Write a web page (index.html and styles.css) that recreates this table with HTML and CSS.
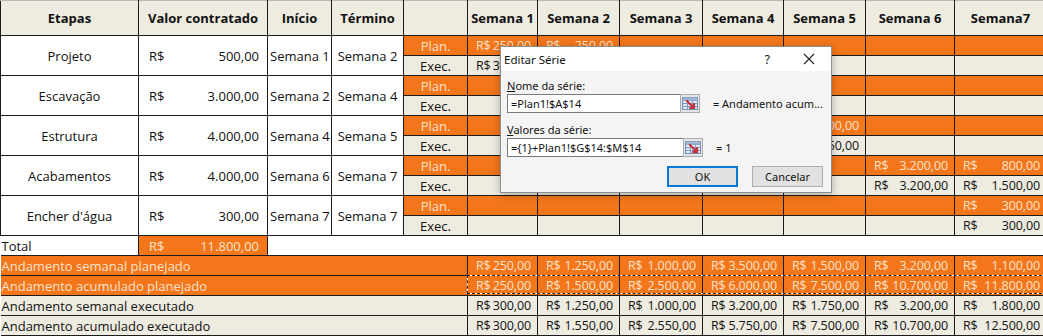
FILE: index.html
```html
<!DOCTYPE html>
<html lang="pt-BR">
<head>
<meta charset="utf-8">
<title>Cronograma físico-financeiro</title>
<link rel="stylesheet" href="styles.css">
</head>
<body>
<div class="sheet">
  <table class="grid">
    <colgroup>
      <col class="c-etapa"><col class="c-valor"><col class="c-ini"><col class="c-fim"><col class="c-tag">
      <col class="c-s1"><col class="c-s2"><col class="c-s3"><col class="c-s4"><col class="c-s5"><col class="c-s6"><col class="c-s7">
    </colgroup>
    <thead>
      <tr class="head">
        <th>Etapas</th><th>Valor contratado</th><th>Início</th><th>Término</th><th></th>
        <th>Semana 1</th><th>Semana 2</th><th>Semana 3</th><th>Semana 4</th><th>Semana 5</th><th>Semana 6</th><th>Semana7</th>
      </tr>
    </thead>
    <tbody>
      <!-- Projeto -->
      <tr class="plan">
        <td rowspan="2" class="stage">Projeto</td>
        <td rowspan="2" class="stage"><div class="acc val"><span>R$</span><span>500,00</span></div></td>
        <td rowspan="2" class="stage wk">Semana 1</td>
        <td rowspan="2" class="stage wk">Semana 2</td>
        <td class="tag">Plan.</td>
        <td><div class="acc"><span>R$</span><span>250,00</span></div></td>
        <td><div class="acc"><span>R$</span><span>250,00</span></div></td>
        <td></td><td></td><td></td><td></td><td></td>
      </tr>
      <tr class="exec">
        <td class="tag">Exec.</td>
        <td><div class="acc"><span>R$</span><span>300,00</span></div></td>
        <td></td>
        <td></td><td></td><td></td><td></td><td></td>
      </tr>
      <!-- Escavação -->
      <tr class="plan">
        <td rowspan="2" class="stage">Escavação</td>
        <td rowspan="2" class="stage"><div class="acc val"><span>R$</span><span>3.000,00</span></div></td>
        <td rowspan="2" class="stage wk">Semana 2</td>
        <td rowspan="2" class="stage wk">Semana 4</td>
        <td class="tag">Plan.</td>
        <td></td><td></td><td></td><td></td>
        <td></td><td></td><td></td>
      </tr>
      <tr class="exec">
        <td class="tag">Exec.</td>
        <td></td><td></td><td></td><td></td>
        <td></td><td></td><td></td>
      </tr>
      <!-- Estrutura -->
      <tr class="plan">
        <td rowspan="2" class="stage">Estrutura</td>
        <td rowspan="2" class="stage"><div class="acc val"><span>R$</span><span>4.000,00</span></div></td>
        <td rowspan="2" class="stage wk">Semana 4</td>
        <td rowspan="2" class="stage wk">Semana 5</td>
        <td class="tag">Plan.</td>
        <td></td><td></td><td></td><td></td>
        <td><div class="acc"><span>R$</span><span>1.500,00</span></div></td>
        <td></td><td></td>
      </tr>
      <tr class="exec">
        <td class="tag">Exec.</td>
        <td></td><td></td><td></td><td></td>
        <td><div class="acc"><span>R$</span><span>1.750,00</span></div></td>
        <td></td><td></td>
      </tr>
      <!-- Acabamentos -->
      <tr class="plan">
        <td rowspan="2" class="stage">Acabamentos</td>
        <td rowspan="2" class="stage"><div class="acc val"><span>R$</span><span>4.000,00</span></div></td>
        <td rowspan="2" class="stage wk">Semana 6</td>
        <td rowspan="2" class="stage wk">Semana 7</td>
        <td class="tag">Plan.</td>
        <td></td><td></td><td></td><td></td><td></td>
        <td><div class="acc"><span>R$</span><span>3.200,00</span></div></td>
        <td><div class="acc"><span>R$</span><span>800,00</span></div></td>
      </tr>
      <tr class="exec">
        <td class="tag">Exec.</td>
        <td></td><td></td><td></td><td></td><td></td>
        <td><div class="acc"><span>R$</span><span>3.200,00</span></div></td>
        <td><div class="acc"><span>R$</span><span>1.500,00</span></div></td>
      </tr>
      <!-- Encher d'água -->
      <tr class="plan">
        <td rowspan="2" class="stage">Encher d'água</td>
        <td rowspan="2" class="stage"><div class="acc val"><span>R$</span><span>300,00</span></div></td>
        <td rowspan="2" class="stage wk">Semana 7</td>
        <td rowspan="2" class="stage wk">Semana 7</td>
        <td class="tag">Plan.</td>
        <td></td><td></td><td></td><td></td><td></td><td></td>
        <td><div class="acc"><span>R$</span><span>300,00</span></div></td>
      </tr>
      <tr class="exec">
        <td class="tag">Exec.</td>
        <td></td><td></td><td></td><td></td><td></td><td></td>
        <td><div class="acc"><span>R$</span><span>300,00</span></div></td>
      </tr>
      <!-- Total -->
      <tr class="total">
        <td class="t-label">Total</td>
        <td class="t-val"><div class="acc val"><span>R$</span><span>11.800,00</span></div></td>
        <td colspan="10" class="t-blank"></td>
      </tr>
      <!-- Andamentos -->
      <tr class="plan sum">
        <td colspan="5" class="lbl">Andamento semanal planejado</td>
        <td><div class="acc"><span>R$</span><span>250,00</span></div></td>
        <td><div class="acc"><span>R$</span><span>1.250,00</span></div></td>
        <td><div class="acc"><span>R$</span><span>1.000,00</span></div></td>
        <td><div class="acc"><span>R$</span><span>3.500,00</span></div></td>
        <td><div class="acc"><span>R$</span><span>1.500,00</span></div></td>
        <td><div class="acc"><span>R$</span><span>3.200,00</span></div></td>
        <td><div class="acc"><span>R$</span><span>1.100,00</span></div></td>
      </tr>
      <tr class="plan sum">
        <td colspan="5" class="lbl">Andamento acumulado planejado</td>
        <td><div class="acc"><span>R$</span><span>250,00</span></div></td>
        <td><div class="acc"><span>R$</span><span>1.500,00</span></div></td>
        <td><div class="acc"><span>R$</span><span>2.500,00</span></div></td>
        <td><div class="acc"><span>R$</span><span>6.000,00</span></div></td>
        <td><div class="acc"><span>R$</span><span>7.500,00</span></div></td>
        <td><div class="acc"><span>R$</span><span>10.700,00</span></div></td>
        <td><div class="acc"><span>R$</span><span>11.800,00</span></div></td>
      </tr>
      <tr class="exec sum">
        <td colspan="5" class="lbl">Andamento semanal executado</td>
        <td><div class="acc"><span>R$</span><span>300,00</span></div></td>
        <td><div class="acc"><span>R$</span><span>1.250,00</span></div></td>
        <td><div class="acc"><span>R$</span><span>1.000,00</span></div></td>
        <td><div class="acc"><span>R$</span><span>3.200,00</span></div></td>
        <td><div class="acc"><span>R$</span><span>1.750,00</span></div></td>
        <td><div class="acc"><span>R$</span><span>3.200,00</span></div></td>
        <td><div class="acc"><span>R$</span><span>1.800,00</span></div></td>
      </tr>
      <tr class="exec sum">
        <td colspan="5" class="lbl">Andamento acumulado executado</td>
        <td><div class="acc"><span>R$</span><span>300,00</span></div></td>
        <td><div class="acc"><span>R$</span><span>1.550,00</span></div></td>
        <td><div class="acc"><span>R$</span><span>2.550,00</span></div></td>
        <td><div class="acc"><span>R$</span><span>5.750,00</span></div></td>
        <td><div class="acc"><span>R$</span><span>7.500,00</span></div></td>
        <td><div class="acc"><span>R$</span><span>10.700,00</span></div></td>
        <td><div class="acc"><span>R$</span><span>12.500,00</span></div></td>
      </tr>
    </tbody>
  </table>

  <div class="marquee" aria-hidden="true"></div>

  <div class="dialog" role="dialog" aria-label="Editar Série">
    <div class="dlg-title">
      <span class="dlg-name">Editar Série</span>
      <span class="dlg-help">?</span>
      <span class="dlg-close">
        <svg width="12" height="12" viewBox="0 0 12 12"><path d="M1 1 L11 11 M11 1 L1 11" stroke="#222" stroke-width="1.1" fill="none"/></svg>
      </span>
    </div>
    <div class="dlg-body">
      <div class="dlg-label"><u>N</u>ome da série:</div>
      <div class="dlg-row">
        <div class="dlg-input">=Plan1!$A$14</div>
        <span class="dlg-ref">
          <svg width="16" height="13" viewBox="0 0 16 13">
            <rect x="0.5" y="0.5" width="15" height="12" fill="#dfe9f5" stroke="#6f8fb5"/>
            <path d="M0.5 3.5 H15.5 M0.5 6.5 H15.5 M0.5 9.5 H15.5 M5.5 0.5 V12.5 M10.5 0.5 V12.5" stroke="#7f9cc0" stroke-width="1" fill="none"/>
            <rect x="0.5" y="0.5" width="15" height="3" fill="#9fb6d4"/>
            <path d="M5 4 L11.5 10.5 M8 11 L12 11 L12 7" stroke="#c7303a" stroke-width="2.2" fill="none" stroke-linecap="round"/>
          </svg>
        </span>
        <span class="dlg-preview">= Andamento acum...</span>
      </div>
      <div class="dlg-label second"><u>V</u>alores da série:</div>
      <div class="dlg-row">
        <div class="dlg-input">={1}+Plan1!$G$14:$M$14</div>
        <span class="dlg-ref">
          <svg width="16" height="13" viewBox="0 0 16 13">
            <rect x="0.5" y="0.5" width="15" height="12" fill="#dfe9f5" stroke="#6f8fb5"/>
            <path d="M0.5 3.5 H15.5 M0.5 6.5 H15.5 M0.5 9.5 H15.5 M5.5 0.5 V12.5 M10.5 0.5 V12.5" stroke="#7f9cc0" stroke-width="1" fill="none"/>
            <rect x="0.5" y="0.5" width="15" height="3" fill="#9fb6d4"/>
            <path d="M5 4 L11.5 10.5 M8 11 L12 11 L12 7" stroke="#c7303a" stroke-width="2.2" fill="none" stroke-linecap="round"/>
          </svg>
        </span>
        <span class="dlg-preview">= 1</span>
      </div>
      <div class="dlg-buttons">
        <button class="btn ok">OK</button>
        <button class="btn">Cancelar</button>
      </div>
    </div>
  </div>
</div>
</body>
</html>
```

FILE: styles.css
```css
html, body {
  margin: 0;
  padding: 0;
  background: #ffffff;
  overflow: hidden;
}

.sheet {
  position: relative;
  width: 1043px;
  height: 336px;
  overflow: hidden;
  font-family: "Open Sans", "Noto Sans", sans-serif;
  font-size: 13px;
  color: #111;
}

.grid {
  border-collapse: collapse;
  table-layout: fixed;
  width: 1046px;
}

.c-etapa { width: 138px; }
.c-valor { width: 129px; }
.c-ini { width: 64px; }
.c-fim { width: 72px; }
.c-tag { width: 64px; }
.c-s1 { width: 70px; }
.c-s2 { width: 82px; }
.c-s3 { width: 83px; }
.c-s4 { width: 81px; }
.c-s5 { width: 82px; }
.c-s6 { width: 89px; }
.c-s7 { width: 92px; }

.grid th,
.grid td {
  border: 1px solid #1c1c1c;
  padding: 0;
  white-space: nowrap;
  overflow: hidden;
  line-height: 18px;
}

.head th {
  height: 34px;
  background: #eeece1;
  font-weight: 700;
  text-align: center;
  border-top: 1px solid #b9b9b9;
}

.grid tbody tr {
  height: 20px;
}

.grid td {
  height: 19px;
}

.stage {
  background: #ffffff;
  text-align: center;
}

.stage.wk {
  padding: 0 2px;
}

.plan td {
  background: #f3761b;
  color: #fbe3cd;
}

.exec td {
  background: #eeece1;
  color: #111;
}

.plan td.stage,
.exec td.stage {
  background: #ffffff;
  color: #111;
}

.tag {
  text-align: center;
}

.acc {
  display: flex;
  justify-content: space-between;
  gap: 2px;
  padding: 0 6px 0 8px;
  font-size: 12.5px;
  letter-spacing: -0.1px;
}

.acc.val {
  padding: 0 8px 0 10px;
  font-size: 13px;
  letter-spacing: 0;
}

.total td {
  height: 19px;
}

.total .t-label {
  background: #ffffff;
  border-left: none;
  padding-left: 1px;
}

.total .t-val {
  background: #f3761b;
  color: #fbe3cd;
}

.total .t-blank {
  border-right: none;
  border-top: 1px solid #1c1c1c;
  border-bottom: 1px solid #1c1c1c;
  background: #ffffff;
}

.sum .lbl {
  text-align: left;
  padding-left: 1px;
  border-left: none;
}

.marquee {
  position: absolute;
  left: 467px;
  top: 275px;
  width: 580px;
  height: 19px;
  pointer-events: none;
}

.marquee::before,
.marquee::after {
  content: "";
  position: absolute;
  inset: 0;
  border: 1px solid #ffffff;
}

.marquee::after {
  border: 1px dashed #2a2a2a;
}

/* Dialog */
.dialog {
  position: absolute;
  left: 500px;
  top: 46px;
  width: 330px;
  height: 145px;
  background: #f4f4f4;
  border: 1px solid #8e8e8e;
  box-shadow: 0 2px 8px rgba(0, 0, 0, 0.28);
  font-family: "Noto Sans", "Open Sans", sans-serif;
  font-size: 11px;
  color: #111;
  display: flex;
  flex-direction: column;
  white-space: nowrap;
}

.dlg-title {
  height: 24px;
  flex: none;
  display: flex;
  align-items: center;
  padding: 0 0 0 3px;
  background: #ffffff;
}

.dlg-name {
  flex: 1;
  font-size: 11.5px;
}

.dlg-help {
  font-size: 12px;
  margin-right: 33px;
}

.dlg-close {
  display: flex;
  margin-right: 16px;
}

.dlg-body {
  display: flex;
  flex-direction: column;
  padding: 7px 8px 0 6px;
}

.dlg-label {
  height: 16px;
  line-height: 16px;
}

.dlg-label.second {
  margin-top: 9px;
}

.dlg-row {
  display: flex;
  align-items: stretch;
  height: 19px;
}

.dlg-input {
  width: 172px;
  line-height: 17px;
  border: 1px solid #7a7a7a;
  border-right: none;
  background: #ffffff;
  padding-left: 3px;
  font-size: 11px;
}

.dlg-ref {
  width: 18px;
  border: 1px solid #adadad;
  background: #e6e6e6;
  display: flex;
  align-items: center;
  justify-content: center;
}

.dlg-preview {
  margin-left: 13px;
  line-height: 19px;
  white-space: nowrap;
}

.dlg-buttons {
  display: flex;
  justify-content: flex-end;
  gap: 14px;
  margin-top: 9px;
  padding-right: 0;
}

.btn {
  width: 71px;
  height: 21px;
  border: 1px solid #adadad;
  background: #e1e1e1;
  font-family: "Noto Sans", "Open Sans", sans-serif;
  font-size: 11px;
  color: #111;
  padding: 0;
}

.btn.ok {
  border: 2px solid #0078d7;
}
```
